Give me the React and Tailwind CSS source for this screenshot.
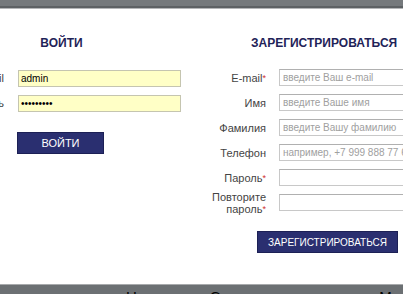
const loginFields = [
  { label: 'E-mail', value: 'admin', type: 'text' },
  { label: 'Пароль', value: 'adminpass', type: 'password' },
];

const registerFields = [
  { label: 'E-mail', required: true, placeholder: 'введите Ваш e-mail' },
  { label: 'Имя', placeholder: 'введите Ваше имя' },
  { label: 'Фамилия', placeholder: 'введите Вашу фамилию' },
  { label: 'Телефон', placeholder: 'например, +7 999 888 77 66' },
  { label: 'Пароль', required: true, type: 'password' },
  { label: ['Повторите', 'пароль'], required: true, type: 'password' },
];

function Star() {
  return <span className="text-[#d03030] text-[9px] align-top">*</span>;
}

export default function App() {
  return (
    <div
      className="w-[403px] h-[294px] overflow-hidden bg-white flex flex-col"
      style={{ fontFamily: '"Liberation Sans", Arial, sans-serif' }}
    >
      {/* top bar */}
      <div className="h-[6px] bg-[#75797c]"></div>
      <div className="h-[2px] bg-[#5d6164]"></div>
      <div className="h-[1px] bg-[#b4b6b8]"></div>

      <div className="flex-1 flex">
        {/* login */}
        <div className="w-[239px] ml-[-58px] shrink-0 flex flex-col">
          <div className="mt-[27px] h-[14px] leading-[14px] text-center text-[12px] font-bold text-[#1f2358]">
            ВОЙТИ
          </div>
          <div className="mt-[20px] flex flex-col gap-[8px]">
            {loginFields.map((f) => (
              <div key={f.label} className="flex items-center h-[17px]">
                <div className="w-[62px] text-right text-[11px] text-[#444]">{f.label}</div>
                <input
                  readOnly
                  type={f.type}
                  value={f.value}
                  className="ml-[14px] w-[163px] h-[17px] bg-[#ffffc6] border border-[#c5c5b0] px-[2px] text-[10px] text-black outline-none"
                />
              </div>
            ))}
          </div>
          <button className="mt-[20px] ml-[75px] w-[87px] h-[22px] bg-[#2a2f70] border border-[#1c2055] text-white text-[11px]">
            ВОЙТИ
          </button>
        </div>

        {/* register */}
        <div className="flex-1 ml-[19px] flex flex-col min-w-0">
          <div className="mt-[27px] pl-[51px] h-[14px] leading-[14px] text-[12px] font-bold text-[#1f2358] whitespace-nowrap">
            ЗАРЕГИСТРИРОВАТЬСЯ
          </div>
          <div className="mt-[19px] flex flex-col gap-[8px]">
            {registerFields.map((f, i) => (
              <div key={i} className="flex items-center h-[17px]">
                <div className="w-[66px] shrink-0 text-right text-[11px] leading-[12px] text-[#444]">
                  {Array.isArray(f.label) ? (
                    <>
                      {f.label[0]}
                      <br />
                      {f.label[1]}
                      <Star />
                    </>
                  ) : (
                    <>
                      {f.label}
                      {f.required && <Star />}
                    </>
                  )}
                </div>
                <input
                  readOnly
                  type={f.type || 'text'}
                  placeholder={f.placeholder}
                  className="ml-[13px] w-[140px] shrink-0 h-[17px] bg-white border border-[#c8c8c8] border-t-[#b0b0b0] px-[3px] text-[10px] placeholder:text-[#a0a0a0] outline-none"
                />
              </div>
            ))}
          </div>
          <button className="mt-[20px] ml-[57px] w-[141px] h-[22px] bg-[#2a2f70] border border-[#1c2055] text-white text-[10px] whitespace-nowrap">
            ЗАРЕГИСТРИРОВАТЬСЯ
          </button>
        </div>
      </div>

      {/* bottom bar */}
      <div className="h-[1px] bg-[#a8aaac]"></div>
      <div className="h-[9px] bg-[#6c7073] relative overflow-hidden">
        <div className="flex pt-[4px] text-[15px] leading-[15px] text-black whitespace-nowrap">
          <span className="ml-[126px]">Новинки</span>
          <span className="ml-[25px]">Скидки</span>
          <span className="ml-[120px]">Магазины</span>
        </div>
      </div>
    </div>
  );
}
